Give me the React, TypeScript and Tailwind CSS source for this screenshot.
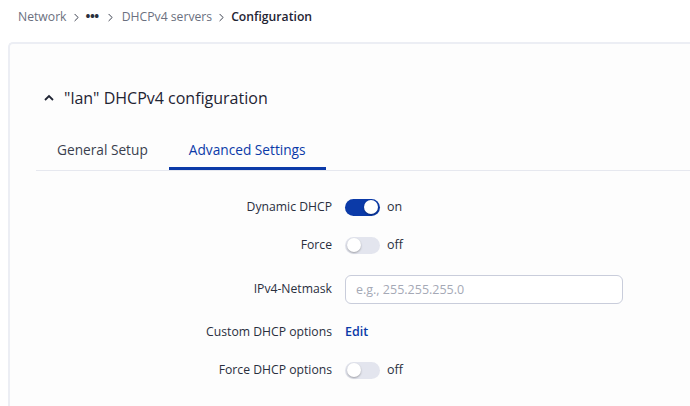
import { ChevronRight } from 'lucide-react';

const font = { fontFamily: '"Open Sans", "Noto Sans", sans-serif' };

function Toggle({ on }: { on: boolean }) {
  return (
    <div className="flex items-center gap-[7px]">
      <div
        className={`flex h-[17px] w-[35px] items-center rounded-full px-[2px] ${
          on ? 'justify-end bg-[#0b3aa8]' : 'justify-start bg-[#e3e5ee]'
        }`}
      >
        <div className="h-[14px] w-[14px] rounded-full bg-white shadow-[0_1px_2px_rgba(0,0,0,0.3)]" />
      </div>
      <span className="text-[12.5px] text-[#2a2f3d]">{on ? 'on' : 'off'}</span>
    </div>
  );
}

interface Row {
  label: string;
  height: string;
  control: React.ReactNode;
}

const rows: Row[] = [
  { label: 'Dynamic DHCP', height: 'h-[38px]', control: <Toggle on /> },
  { label: 'Force', height: 'h-[38px]', control: <Toggle on={false} /> },
  {
    label: 'IPv4-Netmask',
    height: 'h-[50px]',
    control: (
      <input
        placeholder="e.g., 255.255.255.0"
        className="h-[29px] w-[278px] rounded-[6px] border border-[#c9cddb] bg-white px-[10px] text-[12.5px] text-[#2a2f3d] outline-none placeholder:text-[#a5a9b6]"
      />
    ),
  },
  {
    label: 'Custom DHCP options',
    height: 'h-[37px]',
    control: <span className="text-[12.5px] font-semibold text-[#0b3aa8]">Edit</span>,
  },
  { label: 'Force DHCP options', height: 'h-[38px]', control: <Toggle on={false} /> },
];

export default function App() {
  return (
    <div className="h-[406px] w-[690px] overflow-hidden bg-white" style={font}>
      <nav className="flex h-[33px] items-center pl-[18px] pt-[1px] text-[12.2px]">
        <span className="text-[#6b7080]">Network</span>
        <ChevronRight size={13} strokeWidth={1.8} className="mx-[3px] text-[#3a3f4d]" />
        <span className="text-[13px] font-bold tracking-[-0.5px] text-[#2a2f3d]">•••</span>
        <ChevronRight size={13} strokeWidth={1.8} className="mx-[5px] text-[#3a3f4d]" />
        <span className="text-[#6b7080]">DHCPv4 servers</span>
        <ChevronRight size={13} strokeWidth={1.8} className="mx-[3px] text-[#3a3f4d]" />
        <span className="font-semibold text-[#1f2433]">Configuration</span>
      </nav>

      <div className="ml-[8px] mt-[9px] h-[400px] rounded-tl-[5px] border-l-2 border-t-2 border-[#eceef4] bg-[#fdfdfd] pl-[26px] pt-[42px]">
        <div className="flex h-[24px] items-center">
          <svg width="12" height="8" viewBox="0 0 12 8" className="ml-[7px] mr-[9px]">
            <path d="M2 6 L6 2 L10 6" fill="none" stroke="#1f2433" strokeWidth="1.8" />
          </svg>
          <h1 className="text-[16px] font-medium text-[#1f2433]">"lan" DHCPv4 configuration</h1>
        </div>

        <div className="mt-[23px] flex border-b border-[#e6e8ef]">
          <div className="flex h-[37px] items-center px-[21px] pb-[3px] text-[13.7px] text-[#3a3f4d]">
            General Setup
          </div>
          <div className="flex h-[37px] items-center border-b-[3px] border-[#0b3aa8] px-[20px] text-[13.7px] text-[#0b3aa8]">
            Advanced Settings
          </div>
        </div>

        <div className="mt-[17px] flex flex-col">
          {rows.map(({ label, height, control }) => (
            <div key={label} className={`flex items-center ${height}`}>
              <div className="w-[296px] text-right text-[12.2px] text-[#2a2f3d]">{label}</div>
              <div className="ml-[13px] flex items-center">{control}</div>
            </div>
          ))}
        </div>
      </div>
    </div>
  );
}
